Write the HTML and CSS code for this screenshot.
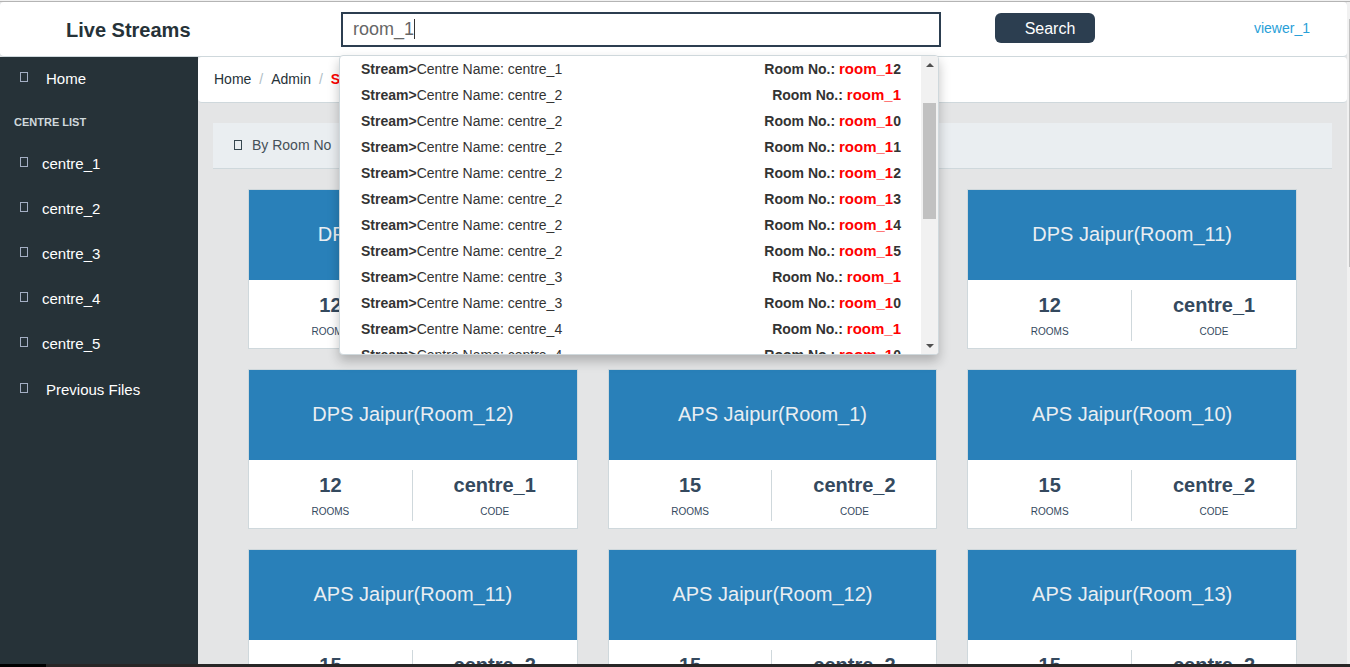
FILE: index.html
```html
<!DOCTYPE html>
<html lang="en">
<head>
<meta charset="utf-8">
<title>Live Streams</title>
<link rel="stylesheet" href="styles.css">
</head>
<body>
<div class="page">
  <div class="viewport">
    <div class="app">
      <header class="topbar">
        <h1 class="brand">Live Streams</h1>
        <form class="search">
          <div class="search-field">
            <input class="search-input" type="text" value="room_1" aria-label="Search rooms">
            <span class="caret"></span>
            <div class="menu">
              <ul class="results" id="results"></ul>
              <div class="bar">
                <span class="arrow up"></span>
                <span class="thumb"></span>
                <span class="arrow down"></span>
              </div>
            </div>
          </div>
          <button class="search-button" type="button">Search</button>
        </form>
        <a class="user" href="#">viewer_1</a>
      </header>
      <div class="body">
        <nav class="sidebar">
          <a class="nav-link main" href="#"><i class="glyph"></i>Home</a>
          <h2 class="nav-title">CENTRE LIST</h2>
          <a class="nav-link" href="#"><i class="glyph"></i>centre_1</a>
          <a class="nav-link" href="#"><i class="glyph"></i>centre_2</a>
          <a class="nav-link" href="#"><i class="glyph"></i>centre_3</a>
          <a class="nav-link" href="#"><i class="glyph"></i>centre_4</a>
          <a class="nav-link" href="#"><i class="glyph"></i>centre_5</a>
          <a class="nav-link main files" href="#"><i class="glyph"></i>Previous Files</a>
        </nav>
        <main class="content">
          <nav class="crumbs" aria-label="Breadcrumb">
            <a href="#">Home</a><span class="slash">/</span><a href="#">Admin</a><span class="slash">/</span><b class="current">Streams</b>
          </nav>
          <div class="panel"><i class="glyph dark"></i>By Room No</div>
          <div class="cards" id="cards"></div>
        </main>
      </div>
    </div>
    <div class="page-scroll"><span class="page-thumb"></span></div>
  </div>
  <div class="taskbar"><span class="task"></span></div>
</div>
<script src="app.js"></script>
</body>
</html>
```
FILE: styles.css
```css
* { box-sizing: border-box; }
body {
  margin: 0;
  font-family: "Liberation Sans", Arial, sans-serif;
  font-size: 14px;
  color: #263238;
}
a { color: inherit; text-decoration: none; }
.page {
  height: 100vh;
  display: flex;
  flex-direction: column;
  overflow: hidden;
  border-top: 1px solid #f1f1f1;
}
.viewport {
  flex: 1;
  min-height: 0;
  display: flex;
  border-top: 1px solid #b4b4b4;
}
.app {
  flex: 1;
  min-width: 0;
  display: flex;
  flex-direction: column;
  background: #e4e5e6;
}
.topbar {
  flex: none;
  display: flex;
  align-items: center;
  height: 55px;
  padding-right: 37px;
  background: #fff;
  border-bottom: 1px solid #cfd8dc;
  border-radius: 4px;
}
.brand {
  margin: 0;
  flex: 0 0 341px;
  padding: 2px 0 0 66px;
  font-size: 20px;
  line-height: 24px;
}
.search { flex: 1; display: flex; align-items: flex-start; gap: 54px; }
.search-field { position: relative; flex: 0 1 600px; height: 35px; }
.search-input {
  width: 100%;
  height: 35px;
  padding: 0 10px;
  border: 2px solid #2c3e50;
  outline: none;
  background: #fff;
  color: #666;
  font: 18px "Liberation Sans", Arial, sans-serif;
}
.caret { position: absolute; left: 73px; top: 7px; width: 1px; height: 20px; background: #333; }
.search-button {
  width: 100px;
  height: 30px;
  margin-top: 1px;
  padding: 2px 0 0 10px;
  border: 0;
  border-radius: 6px;
  background: #2c3e50;
  color: #fff;
  font: 16px "Liberation Sans", Arial, sans-serif;
}
.user { padding-bottom: 2px; color: #29a0d8; }
.menu {
  position: absolute;
  z-index: 5;
  left: -2px;
  top: 43px;
  width: 100%;
  height: 300px;
  display: flex;
  overflow: hidden;
  background: #fff;
  border: 1px solid #cfd8dc;
  border-radius: 4px;
  box-shadow: 0 6px 12px rgba(0, 0, 0, 0.24);
}
.results { flex: 1; margin: 0; padding: 0 20px 0 21px; list-style: none; color: #333; }
.results li { display: flex; justify-content: space-between; height: 26px; line-height: 26px; }
.results mark { background: none; color: #f00; font-size: 15px; }
.room { font-weight: bold; }
.bar {
  width: 17px;
  padding: 7px 2px 6px;
  display: flex;
  flex-direction: column;
  align-items: center;
  background: #f1f1f1;
}
.arrow { border: 4px solid transparent; }
.up { border-top: 0; border-bottom-color: #505050; }
.down { margin-top: auto; border-bottom: 0; border-top-color: #505050; }
.thumb { width: 13px; height: 116px; margin-top: 36px; background: #c1c1c1; }

.body { flex: 1; min-height: 0; display: flex; }
.sidebar { flex: none; width: 198px; background: #263238; color: #fff; }
.nav-link {
  display: flex;
  align-items: center;
  gap: 14px;
  height: 45px;
  padding: 0 0 2px 20px;
  font-size: 15px;
}
.nav-link.main { gap: 18px; }
.nav-link.files { margin-top: 1px; }
.glyph {
  width: 8px;
  height: 10px;
  margin-bottom: 4px;
  border: 1px solid #a4afc4;
}
.glyph.dark { margin-bottom: 0; border-color: #37474f; }
.nav-title { margin: 0; padding-left: 14px; font-size: 11px; line-height: 40px; color: #cfd8dc; }
.content {
  flex: 1;
  min-width: 0;
  overflow: hidden;
}
.crumbs {
  display: flex;
  align-items: center;
  gap: 8px;
  height: 46px;
  padding: 0 0 2px 16px;
  background: #fff;
  border-bottom: 1px solid #cfd8dc;
  border-radius: 4px;
}
.slash { color: #b0bec5; }
.current { color: #f00; }
.panel {
  display: flex;
  align-items: center;
  gap: 10px;
  height: 46px;
  margin: 20px 15px;
  padding: 0 0 2px 21px;
  background: #eaeef1;
  border-bottom: 1px solid #cfd8dc;
  color: #455058;
}
.cards {
  display: grid;
  grid-template-columns: repeat(3, 1fr);
  gap: 20px 30px;
  padding: 0 50px;
}
.card { background: #fff; border: 1px solid #cfd8dc; }
.card-title {
  margin: 0;
  height: 90px;
  background: #2980b9;
  color: #e9eef2;
  font-size: 20px;
  font-weight: normal;
  line-height: 88px;
  text-align: center;
}
.stats { display: grid; grid-template-columns: 1fr 1fr; padding: 10px 0 7px; color: #34495e; text-align: center; }
.stat { display: flex; flex-direction: column; height: 51px; }
.stat:first-child { border-right: 1px solid #cfd8dc; }
.stat b { font-size: 20px; line-height: 30px; }
.stat small { font-size: 10px; line-height: 24px; }
.page-scroll { width: 3px; flex: none; padding-top: 17px; background: #f1f1f1; }
.page-thumb { display: block; width: 1px; height: 248px; margin-left: auto; background: #c1c1c1; }
.taskbar { flex: none; height: 3px; background: #282626; }
.task { display: block; width: 46px; height: 3px; background: #000; }
```
FILE: app.js
```js
const hits = [
  [1, "2"], [2, ""], [2, "0"], [2, "1"], [2, "2"], [2, "3"],
  [2, "4"], [2, "5"], [3, ""], [3, "0"], [4, ""], [4, "0"]
];
document.getElementById("results").innerHTML = hits.map(([centre, rest]) =>
  `<li><span><b>Stream&gt;</b>Centre Name: centre_${centre}</span>` +
  `<span class="room">Room No.: <mark>room_1</mark>${rest}</span></li>`).join("");

const rooms = [
  ["DPS", 1, 12, 1], ["DPS", 10, 12, 1], ["DPS", 11, 12, 1],
  ["DPS", 12, 12, 1], ["APS", 1, 15, 2], ["APS", 10, 15, 2],
  ["APS", 11, 15, 2], ["APS", 12, 15, 2], ["APS", 13, 15, 2]
];
document.getElementById("cards").innerHTML = rooms.map(([school, room, count, centre]) =>
  `<section class="card"><h3 class="card-title">${school} Jaipur(Room_${room})</h3>` +
  `<div class="stats"><div class="stat"><b>${count}</b><small>ROOMS</small></div>` +
  `<div class="stat"><b>centre_${centre}</b><small>CODE</small></div></div></section>`).join("");
```
